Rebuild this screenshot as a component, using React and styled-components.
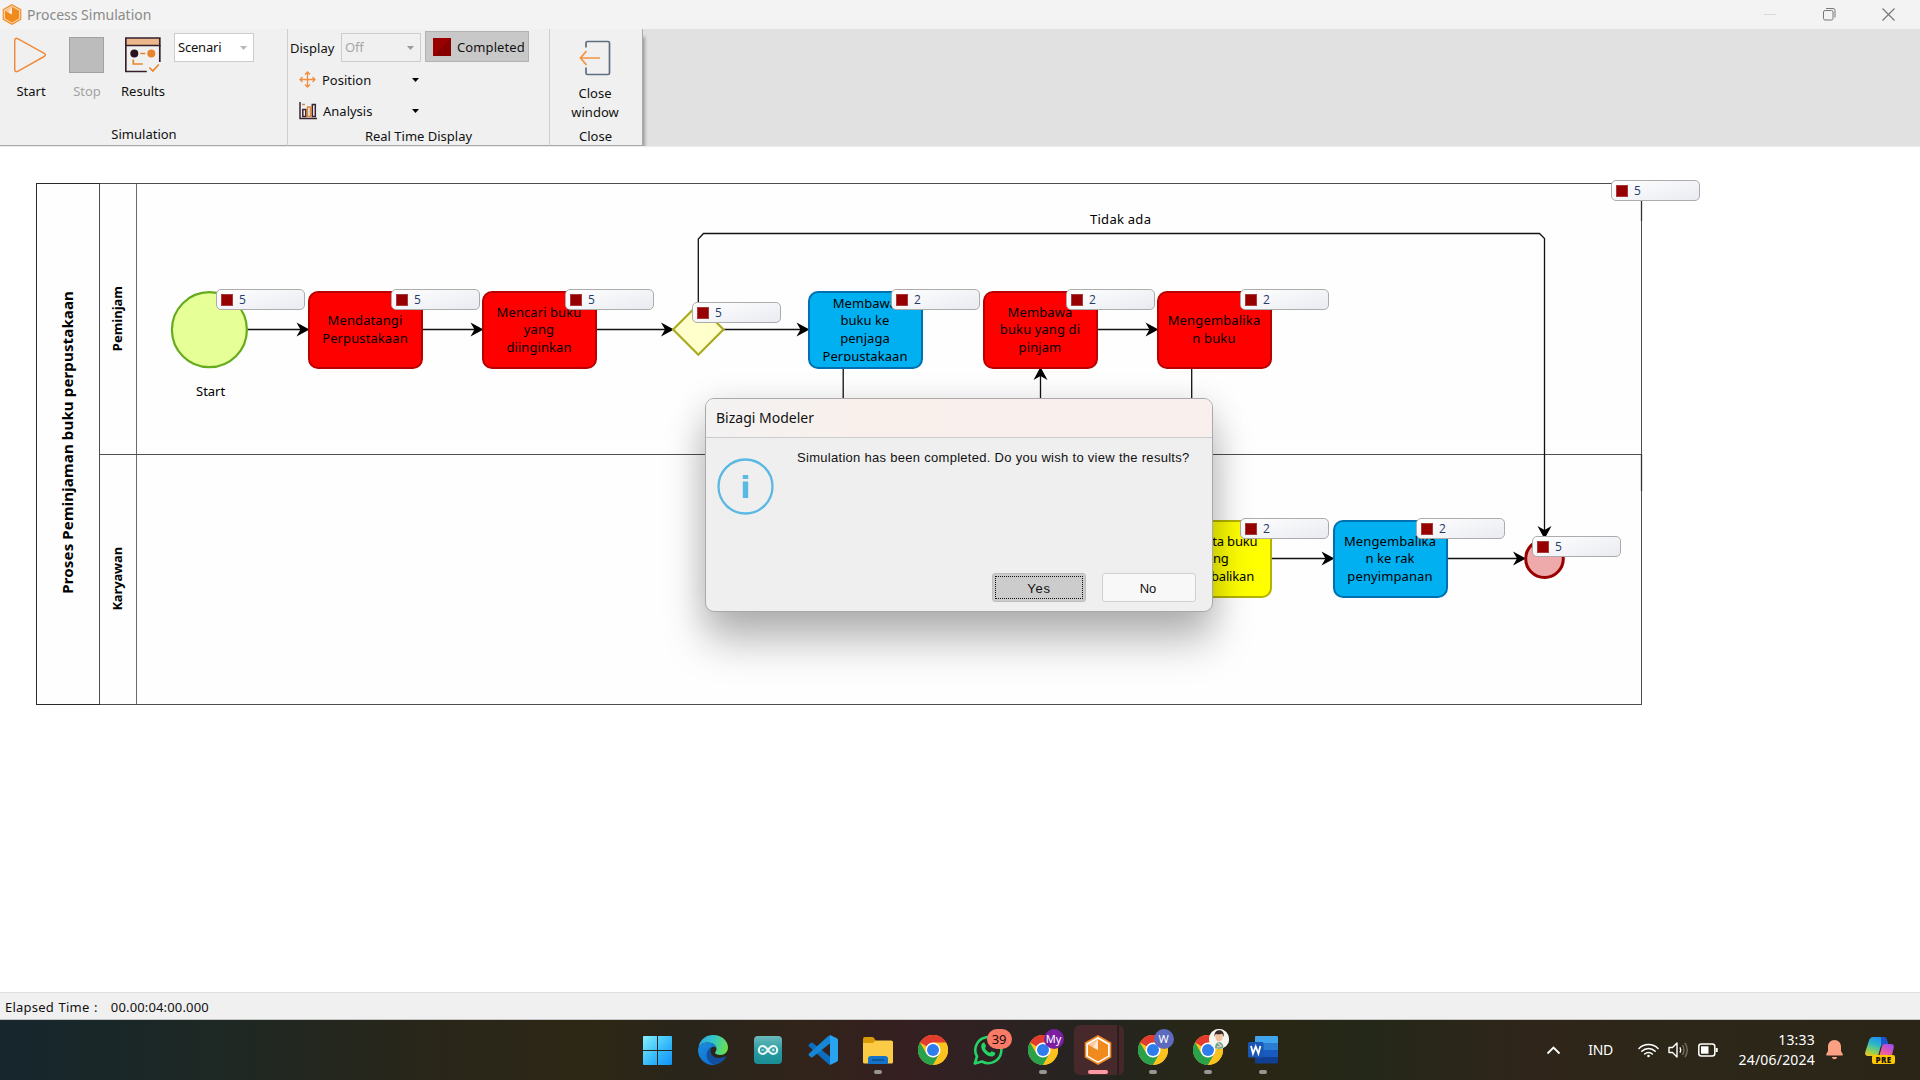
import React from "react";
import styled, { createGlobalStyle } from "styled-components";

const GlobalStyle = createGlobalStyle`
  * { box-sizing: border-box; }
  body { margin: 0; overflow: hidden; background: #fff; }
  #root { font: 13px/18px "Noto Sans", "Open Sans", sans-serif; color: #111; }
  svg { display: block; }
  button { font: inherit; color: inherit; margin: 0; padding: 0; border: 0; background: none; }
`;

const Desktop = styled.div`
  width: 1920px;
  height: 1080px;
  display: flex;
  flex-direction: column;
  overflow: hidden;
`;

/* ---------- title bar ---------- */
const TitleBar = styled.header`
  height: 29px;
  flex: none;
  display: flex;
  align-items: center;
  background: #f3f3f3;
  padding: 0 25px 0 2px;
`;
const WindowTitle = styled.h1`
  margin: 0 auto 0 5px;
  font-size: 14px;
  line-height: 20px;
  font-weight: 400;
  color: #8a8a8a;
`;
const WindowControls = styled.div`
  display: flex;
  gap: 46px;
`;

/* ---------- ribbon ---------- */
const Ribbon = styled.nav`
  height: 118px;
  flex: none;
  display: flex;
  background: #e1e1e1;
  border-bottom: 1px solid #ececec;
`;
const Group = styled.section`
  width: ${(p) => p.$width}px;
  height: 117px;
  display: flex;
  flex-direction: column;
  background: #f0f0f0;
  border-right: 1px solid ${(p) => (p.$last ? "#a8a8a8" : "#cfcfcf")};
  border-bottom: 1px solid #a6a6a6;
  box-shadow: ${(p) => (p.$last ? "3px 7px 3px -1px #9d9d9d" : "none")};
  clip-path: inset(0 -8px 0 0);
`;
const GroupBody = styled.div`
  flex: 1;
  display: flex;
  align-items: flex-start;
  justify-content: ${(p) => (p.$center ? "center" : "flex-start")};
  padding-right: ${(p) => (p.$center ? 2 : 0)}px;
`;
const GroupCaption = styled.div`
  height: 18px;
  margin-bottom: ${(p) => p.$bottom || 0}px;
  padding: 0 ${(p) => p.$right || 0}px 0 ${(p) => p.$left || 0}px;
  text-align: center;
`;
const BigButton = styled.button`
  width: ${(p) => p.$width}px;
  padding-top: ${(p) => p.$top || 8}px;
  display: flex;
  flex-direction: column;
  align-items: center;
  gap: ${(p) => p.$gap || 9}px;
  color: ${(p) => (p.$disabled ? "#a3a3a3" : "#111")};
  line-height: 18.5px;
`;
const Select = styled.div`
  width: ${(p) => p.$width}px;
  height: 29px;
  margin: 4px 0 0 ${(p) => p.$left || 0}px;
  padding: 0 6px 2px 3px;
  display: flex;
  align-items: center;
  justify-content: space-between;
  background: ${(p) => (p.$disabled ? "#f0f0f0" : "#fff")};
  border: 1px solid #cccccc;
  color: ${(p) => (p.$disabled ? "#a8a8a8" : "#111")};
  letter-spacing: -0.2px;
`;
const SelectCaret = styled.span`
  padding-top: 3px;
`;
const DisplayPanel = styled.div`
  display: flex;
  flex-direction: column;
`;
const DisplayRow = styled.div`
  display: flex;
  align-items: flex-start;
  height: 35px;
  padding-left: 2px;
`;
const FieldLabel = styled.span`
  width: 51px;
  padding-top: 10px;
`;
const CompletedToggle = styled.button`
  width: 104px;
  height: 31px;
  margin: 2px 0 0 4px;
  padding-left: 7px;
  display: flex;
  align-items: center;
  gap: 6px;
  background: #c8c8c8;
  border: 1px solid #b2b2b2;
  letter-spacing: 0.1px;
`;
const DarkRedSwatch = styled.span`
  width: 18px;
  height: 18px;
  background: linear-gradient(135deg, #9a0000 50%, #860000 50%);
`;
const MenuRow = styled.button`
  width: 140px;
  height: 31px;
  padding: 0 9px 0 11px;
  display: flex;
  align-items: center;
`;
const MenuLabel = styled.span`
  flex: 1;
  margin-left: 6px;
  text-align: left;
`;

/* ---------- diagram canvas ---------- */
const Canvas = styled.main`
  flex: 1;
  position: relative;
  overflow: hidden;
  background: #fff;
`;
const Pool = styled.div`
  position: absolute;
  left: 36px;
  top: 36px;
  width: 1606px;
  height: 522px;
  display: flex;
  border: 1px solid #4f4f4f;
  background: #fefefe;
`;
const PoolHeader = styled.div`
  width: 63px;
  display: flex;
  align-items: center;
  justify-content: center;
  padding: 0 3px 3px 0;
  border-right: 1px solid #4f4f4f;
  outline: 1px solid #2a2a2a;
  outline-offset: 0;
  clip-path: inset(-1px 0 -1px -1px);
`;
const VerticalText = styled.span`
  writing-mode: vertical-rl;
  transform: rotate(180deg);
  font-weight: 700;
  font-size: ${(p) => p.$size}px;
  line-height: 20px;
  letter-spacing: ${(p) => p.$track || 0}px;
  color: #000;
`;
const Lanes = styled.div`
  flex: 1;
  display: flex;
  flex-direction: column;
`;
const Lane = styled.div`
  flex: ${(p) => (p.$height ? `0 0 ${p.$height}px` : "1")};
  display: flex;
  border-bottom: ${(p) => (p.$height ? "1px solid #4f4f4f" : "0")};
`;
const LaneHeader = styled.div`
  width: 37px;
  border-right: 1px solid #6a6a6a;
  display: flex;
  align-items: center;
  justify-content: center;
  padding: 0 2px 1px 0;
`;
const Connectors = styled.svg`
  position: absolute;
  left: 0;
  top: 0;
`;
const taskColors = {
  red: ["#ff0000", "#b80000"],
  blue: ["#00b0f0", "#0070b0"],
  yellow: ["#ffff00", "#b4b400"],
};
const Task = styled.div`
  position: absolute;
  left: ${(p) => p.$x}px;
  top: ${(p) => p.$y}px;
  width: 115px;
  height: 78px;
  border-radius: 10px;
  border: 2px solid ${(p) => taskColors[p.$color][1]};
  background: ${(p) => taskColors[p.$color][0]};
  display: flex;
  align-items: center;
  justify-content: center;
`;
const TaskText = styled.span`
  height: 62px;
  overflow: hidden;
  display: flex;
  flex-direction: column;
  justify-content: center;
  text-align: center;
  white-space: pre;
  line-height: 17.6px;
  letter-spacing: ${(p) => p.$track || 0}px;
  padding-right: 1px;
  color: #000;
`;
const Badge = styled.div`
  position: absolute;
  left: ${(p) => p.$x}px;
  top: ${(p) => p.$y}px;
  width: 89px;
  height: 21px;
  padding-left: 4px;
  display: flex;
  align-items: center;
  gap: 6px;
  border: 1px solid #acacac;
  border-radius: 5px;
  background: linear-gradient(165deg, #ffffff, #e9ebf1);
  color: #243a6b;
  font: 12px/18px "Open Sans", sans-serif;
`;
const BadgeSquare = styled.span`
  width: 12px;
  height: 12px;
  background: #960000;
  border: 1px solid #a83a3a;
`;
const CanvasLabel = styled.span`
  position: absolute;
  left: ${(p) => p.$x}px;
  top: ${(p) => p.$y}px;
  color: #000;
  letter-spacing: ${(p) => p.$track || 0}px;
`;

/* ---------- dialog ---------- */
const Dialog = styled.div`
  position: absolute;
  left: 705px;
  top: 251px;
  width: 508px;
  height: 214px;
  display: flex;
  flex-direction: column;
  border: 1px solid #a9a9a9;
  border-radius: 9px;
  background: #efefef;
  box-shadow: 0 30px 42px rgba(0, 0, 0, 0.26), 0 4px 34px rgba(0, 0, 0, 0.12);
`;
const DialogTitle = styled.div`
  height: 39px;
  padding: 0 0 0 10px;
  display: flex;
  align-items: center;
  border-bottom: 1px solid #cbcbcb;
  border-radius: 8px 8px 0 0;
  background: linear-gradient(90deg, #f3f2f2, #f9f0ec 30%, #f9efed);
  font-size: 14px;
`;
const DialogBody = styled.div`
  flex: 1;
  display: flex;
  font: 13px/16px "Liberation Sans", Arial, sans-serif;
`;
const DialogIcon = styled.div`
  padding: 20px 0 0 11px;
  width: 91px;
`;
const DialogMessage = styled.p`
  margin: 12px 0 0;
  letter-spacing: 0.29px;
  white-space: nowrap;
`;
const DialogButtons = styled.div`
  display: flex;
  justify-content: flex-end;
  gap: 16px;
  padding: 0 16px 9px 0;
  font: 13px/16px "Liberation Sans", Arial, sans-serif;
`;
const DialogButton = styled.button`
  width: 94px;
  height: 29px;
  padding: 2px;
  display: flex;
  border: 1px solid ${(p) => (p.$focused ? "#bdbdbd" : "#d0d0d0")};
  border-radius: 3px;
  background: ${(p) => (p.$focused ? "#cccccc" : "#f8f8f8")};
`;
const FocusRing = styled.span`
  flex: 1;
  display: flex;
  align-items: center;
  justify-content: center;
  align-self: stretch;
  padding: 2px ${(p) => (p.$focused ? 0 : 2)}px 0 0;
  letter-spacing: ${(p) => (p.$focused ? 0.7 : 0)}px;
  border: 1px ${(p) => (p.$focused ? "dotted #111" : "solid transparent")};
`;

/* ---------- status bar ---------- */
const StatusBar = styled.footer`
  height: 28px;
  flex: none;
  display: flex;
  align-items: center;
  gap: 13px;
  padding: 2px 0 0 5px;
  background: #f0f0f0;
  border-top: 1px solid #dedede;
  border-bottom: 1px solid #c4c4c4;
  word-spacing: 1px;
`;
const StatusLabel = styled.span`
  letter-spacing: ${(p) => p.$track}px;
`;

/* ---------- taskbar ---------- */
const Taskbar = styled.div`
  height: 60px;
  flex: none;
  display: flex;
  justify-content: space-between;
  padding: 0 25px 0 630px;
  background: linear-gradient(90deg, #16262d 0%, #1d2825 10%, #29261a 22%, #2d2715 31%, #29251b 36%, #32241a 42%, #351f21 47%, #2e2223 52%, #242421 57%, #262619 61%, #2a2614 66%, #242819 71%, #30251a 80%, #2c2718 87%, #2b2618 94%, #2a2517 100%);
`;
const AppRow = styled.div`
  display: flex;
`;
const AppCell = styled.button`
  width: 55px;
  height: 60px;
  display: flex;
  flex-direction: column;
  align-items: center;
  justify-content: center;
  position: relative;
`;
const ActiveTile = styled.span`
  position: absolute;
  left: 4px;
  top: 5px;
  width: 50px;
  height: 50px;
  border-radius: 6px;
  background: linear-gradient(90deg, #47292b 0 43px, #2f1d1e 43px 45px, #452729 45px);
`;
const AppIcon = styled.span`
  position: relative;
  display: block;
`;
const Indicator = styled.span`
  position: absolute;
  bottom: 6px;
  width: ${(p) => (p.$active ? 20 : 8)}px;
  height: 4px;
  border-radius: 2px;
  background: ${(p) => (p.$active ? "#ff99a4" : "#989694")};
`;
const AppBadge = styled.span`
  position: absolute;
  right: ${(p) => p.$right}px;
  top: -6px;
  min-width: 20px;
  height: 20px;
  border-radius: 10px;
  display: flex;
  align-items: center;
  justify-content: center;
  overflow: hidden;
  background: ${(p) => p.$bg};
  color: ${(p) => p.$fg || "#fff"};
  font-size: ${(p) => p.$size || 11}px;
  padding: 0 ${(p) => p.$pad || 0}px;
`;
const Tray = styled.div`
  display: flex;
  align-items: center;
  color: #fff;
`;
const Language = styled.span`
  font-size: 14px;
  letter-spacing: -0.3px;
  margin: 0 25px 0 27px;
`;
const TrayIcons = styled.div`
  display: flex;
  align-items: center;
  gap: 9px;
`;
const Clock = styled.div`
  width: 82px;
  margin: 0 11px 0 15px;
  font-size: 14px;
  line-height: 20px;
  letter-spacing: 0.2px;
  text-align: right;
`;
const CopilotSlot = styled.div`
  margin-left: 22px;
  display: flex;
  flex-direction: column;
  align-items: flex-end;
  width: 30px;
`;
const PreTag = styled.span`
  width: 23px;
  height: 9px;
  margin-top: -8px;
  border-radius: 2px;
  background: #ffc800;
  color: #111;
  font: 800 8px/9px "Open Sans", sans-serif;
  letter-spacing: 0.4px;
  text-align: center;
  position: relative;
`;

const BizagiLogo = ({ w, h, ring }) => (
  <svg width={w} height={h} viewBox="0 0 28 30">
    <path d="M14 1 26.5 8v14L14 29 1.500 22V8Z" fill={ring === "white" ? "#fff" : "#fbd3a8"} stroke="#f08a24" strokeWidth="1.600" />
    <path d="M14 4 24 9.700v11L14 26.400 4 20.700v-11Z" fill="#f08a1d" />
    <path d="M14 4v11L4 9.700Z" fill="#fbc9a0" />
    <path d="M14 4v11l-5-2.600Z" fill="#fff" opacity=".55" />
  </svg>
);

const Caret = ({ color }) => (
  <svg width="7" height="4"><path d="M0 0h7L3.500 4Z" fill={color} /></svg>
);

const ChromeIcon = () => (
  <svg width="30" height="30" viewBox="0 0 48 48">
    <circle cx="24" cy="24" r="24" fill="#fcc31e" />
    <path d="M24 24 3.200 12A24 24 0 0 1 44.800 12Z" fill="#e33b2e" />
    <path d="M3.200 12A24 24 0 0 0 24 48L34.400 30 24 24 13.600 30Z" fill="#2aa14b" />
    <path d="M34.400 30 24 48A24 24 0 0 0 44.800 12H24Z" fill="#fcc31e" />
    <circle cx="24" cy="24" r="12" fill="#fff" />
    <circle cx="24" cy="24" r="9.600" fill="#2f7ded" />
  </svg>
);

const WindowsIcon = () => (
  <svg width="29" height="29" viewBox="0 0 29 29">
    <defs>
      <linearGradient id="win" gradientUnits="userSpaceOnUse" x1="0" y1="0" x2="29" y2="29">
        <stop offset="0" stopColor="#86f0ff" /><stop offset=".55" stopColor="#36bbfa" /><stop offset="1" stopColor="#0f92f5" />
      </linearGradient>
    </defs>
    <path d="M0 1Q0 0 1 0h13v14H0ZM15 0h13q1 0 1 1v13H15ZM0 15h14v14H1q-1 0-1-1ZM15 15h14v13q0 1-1 1H15Z" fill="url(#win)" />
  </svg>
);

const EdgeIcon = () => (
  <svg width="30" height="30" viewBox="0 0 30 30">
    <defs>
      <linearGradient id="edgeTop" x1="0" y1=".3" x2="1" y2=".5">
        <stop offset="0" stopColor="#2aa7e8" /><stop offset=".5" stopColor="#36c9c4" /><stop offset="1" stopColor="#6be04a" />
      </linearGradient>
      <linearGradient id="edgeLeft" x1="0" y1="0" x2=".6" y2="1">
        <stop offset="0" stopColor="#1c8fe0" /><stop offset="1" stopColor="#0f6fd0" />
      </linearGradient>
    </defs>
    <path d="M0.500 12C2 4.500 8 0 15 0c9 0 15 6 15 12.500 0 4.500-3.500 7.500-7.500 7.500-3.500 0-5.500-1.200-5.500-2.200 0-.8 1.500-1.500 1.500-4C18.500 10.500 15 7.500 10 7.500 5.500 7.500 2 9.500 0.500 12Z" fill="url(#edgeTop)" />
    <path d="M0 15C0 11 4 7.500 10 7.500c4.500 0 8 2.500 8.400 5.500C17 11.400 15 11.500 14 12c-2.500 1.300-4.500 4-4.500 8 0 5 3.500 8.500 8 9.700C8 31.500 0 24 0 15Z" fill="url(#edgeLeft)" />
    <path d="M14 12c-1.500 2-1.800 4.500-.5 7.200 2 3.900 8 5 13.500 2.300.8-.3 1.200.3.8 1-2.300 4-6 6.500-10.300 7.200C12 28.700 8.700 24.500 8.700 20c0-4 2.500-7 5.300-8Z" fill="#124f9e" />
  </svg>
);

const ArduinoIcon = () => (
  <svg width="28" height="28" viewBox="0 0 28 28">
    <defs><linearGradient id="ard" x1="0" y1="0" x2="0" y2="1"><stop offset="0" stopColor="#6cb9bb" /><stop offset=".5" stopColor="#2a9da3" /><stop offset="1" stopColor="#188d94" /></linearGradient></defs>
    <rect width="28" height="28" rx="4" fill="url(#ard)" />
    <path d="M14 14c-2-3-3.500-4-5.200-4a4 4 0 0 0 0 8c1.700 0 3.200-1 5.200-4Zm0 0c2-3 3.500-4 5.200-4a4 4 0 0 1 0 8c-1.700 0-3.200-1-5.200-4Z" fill="none" stroke="#e8f6f6" strokeWidth="2.200" />
    <path d="M7.300 14h3M17.700 14h3M19.200 12.500v3" stroke="#e8f6f6" strokeWidth="1" />
  </svg>
);

const VsCodeIcon = () => (
  <svg width="30" height="30" viewBox="0 0 30 30">
    <path d="M1 9.500 3 7.800q.8-.5 1.500 0L22.500 22v7.500Q21 29.800 20 28.700L.8 11.300q-.8-1 .2-1.800Z" fill="#0d6ebf" />
    <path d="M1 20.500l2 1.800q.8.500 1.500 0L22.500 8V.500Q21 .2 20 1.300L.8 18.700q-.8 1 .2 1.800Z" fill="#1587d6" />
    <path d="M22 0l6.800 3.200Q30 3.800 30 5v20q0 1.200-1.200 1.800L22 30Z" fill="#27a3f2" />
  </svg>
);

const FolderIcon = () => (
  <svg width="30" height="27" viewBox="0 0 30 27">
    <path d="M0 2q0-2 2-2h7q1.200 0 2 1l2 3H28q2 0 2 2v4H0Z" fill="#d99a09" />
    <path d="M0 6h10l2.500-2.500H28q2 0 2 2V25q0 1.500-1.500 1.500h-27Q0 26.500 0 25Z" fill="#fccb45" />
    <path d="M5 27v-5q0-3 3-3h14q3 0 3 3v5Z" fill="#1373c9" />
    <path d="M9 23h12" stroke="#084b8f" strokeWidth="1.400" />
  </svg>
);

const WhatsAppIcon = () => (
  <svg width="30" height="30" viewBox="0 0 30 30">
    <path d="M1.800 28.500 4 21.500A13 13 0 1 1 9 26.500Z" fill="none" stroke="#25d366" strokeWidth="2.600" strokeLinejoin="round" />
    <path d="M9.300 8.300c1-1 2-1 2.600.2l1.100 2.500c.2.800-1 1.700-1 2.200 1 2.300 2.700 3.700 4.900 4.600.6 0 1.300-1.600 2-1.600l2.700 1.300c1 .6.600 1.900-.1 2.700-2.500 2.600-6.500 1-9.500-1.700-3.300-3-5-7.400-2.700-10.200Z" fill="#25d366" />
  </svg>
);

const WordIcon = () => (
  <svg width="30" height="28" viewBox="0 0 30 28">
    <path d="M7 1q0-1 1-1h21q1 0 1 1v6H7Z" fill="#41a5ee" />
    <path d="M7 7h23v7H7Z" fill="#2b7cd3" />
    <path d="M7 14h23v7H7Z" fill="#185abd" />
    <path d="M7 21h23v5.500q0 1-1 1H8q-1 0-1-1Z" fill="#103f91" />
    <rect x="0" y="6" width="15.500" height="15.500" rx="1.500" fill="#1a56b5" />
    <path d="M3 10l2 7.500 2.700-7 2.700 7 2-7.500" fill="none" stroke="#fff" strokeWidth="1.800" />
  </svg>
);

const AvatarFace = () => (
  <svg width="20" height="20" viewBox="0 0 20 20">
    <rect width="20" height="20" fill="#f7f5f0" />
    <path d="M6 20c0-5 1.500-7 4-7s4.500 2 4.500 7Z" fill="#5fa9a0" />
    <ellipse cx="10" cy="8" rx="3.600" ry="4.300" fill="#eec49d" />
    <path d="M5.500 8C5 3 7.500 1.200 10.500 1.200S15.500 3.500 14.500 8c-.6-2-1-3-2-3.300-2 .8-4 .6-5.500.3-.8.7-1 1.500-1.500 3Z" fill="#3a2a25" />
    <path d="M8.500 13.500l3.500 3M8 18l5-1" stroke="#eec49d" strokeWidth="1.500" />
  </svg>
);

const tasks = [
  { x: 308, y: 144, color: "red", lines: ["Mendatangi", "Perpustakaan"], track: 0.1 },
  { x: 482, y: 144, color: "red", lines: ["Mencari buku", "yang", "diinginkan"], track: 0.08 },
  { x: 808, y: 144, color: "blue", lines: ["Membawa", "buku ke", "penjaga", "Perpustakaan"], track: 0.05 },
  { x: 983, y: 144, color: "red", lines: ["Membawa", "buku yang di", "pinjam"], track: 0.1 },
  { x: 1157, y: 144, color: "red", lines: ["Mengembalika", "n buku"], track: 0.15 },
  { x: 1157, y: 373, color: "yellow", lines: ["Mendata buku", "yang", "dikembalikan"], track: -0.15 },
  { x: 1333, y: 373, color: "blue", lines: ["Mengembalika", "n ke rak", "penyimpanan"], track: 0.1 },
];

const badges = [
  [216, 142, 5], [391, 142, 5], [565, 142, 5], [692, 155, 5], [891, 142, 2], [1066, 142, 2],
  [1240, 142, 2], [1240, 371, 2], [1416, 371, 2], [1532, 389, 5], [1611, 33, 5],
];

const Arrow = ({ x, y, turn = 0 }) => (
  <path d="M0 0 -13 -7 -9 0 -13 7Z" transform={`translate(${x} ${y}) rotate(${turn})`} fill="#000" />
);

const Diagram = () => (
  <>
    <Pool>
      <PoolHeader>
        <VerticalText $size={15} $track={0.15}>Proses Peminjaman buku perpustakaan</VerticalText>
      </PoolHeader>
      <Lanes>
        <Lane $height={271}>
          <LaneHeader><VerticalText $size={13}>Peminjam</VerticalText></LaneHeader>
        </Lane>
        <Lane>
          <LaneHeader><VerticalText $size={13} $track={-0.15}>Karyawan</VerticalText></LaneHeader>
        </Lane>
      </Lanes>
    </Pool>
    <Connectors width="1920" height="845" fill="none" stroke="#111" strokeWidth="1.300">
      <path d="M247 182.500H302M423 182.500H476M597 182.500H667M723 182.500H802M1098 182.500H1151M1272 411.500H1327M1448 411.500H1520" />
      <path d="M698.300 157V92L703.500 86.500H1539.500L1544.500 91.500V384M843.200 221V260M1040.500 226V260M1191.700 221V260" />
      <path d="M1641.500 54v20M1641.500 307v37" stroke="#333" />
      <g stroke="none">
        <Arrow x={309.5} y={182.5} /><Arrow x={483.5} y={182.5} /><Arrow x={674} y={182.5} />
        <Arrow x={809.5} y={182.5} /><Arrow x={1158.5} y={182.5} /><Arrow x={1334.5} y={411.5} />
        <Arrow x={1526} y={411.5} /><Arrow x={1040.5} y={220} turn={-90} /><Arrow x={1544.5} y={392} turn={90} />
      </g>
      <circle cx="209.400" cy="182.700" r="37.500" fill="#e6ff97" stroke="#66ab1e" strokeWidth="2.200" />
      <path d="M698.300 157.300 723.500 182.500 698.300 207.700 673.100 182.500Z" fill="#ffffcc" stroke="#aaaa20" strokeWidth="2.200" />
      <circle cx="1544.500" cy="411.700" r="18.800" fill="#eeaaaa" stroke="#990000" strokeWidth="3" />
    </Connectors>
    {tasks.map((t, i) => (
      <Task key={i} $x={t.x} $y={t.y} $color={t.color}>
        <TaskText $track={t.track}>{t.lines.map((l) => <span key={l}>{l}</span>)}</TaskText>
      </Task>
    ))}
    <CanvasLabel $x={196} $y={235}>Start</CanvasLabel>
    <CanvasLabel $x={1090} $y={63} $track={0.27}>Tidak ada</CanvasLabel>
    {badges.map(([x, y, n], i) => (
      <Badge key={i} $x={x} $y={y}><BadgeSquare />{n}</Badge>
    ))}
  </>
);

export default function App() {
  return (
    <Desktop>
      <GlobalStyle />
      <TitleBar>
        <BizagiLogo w={20} h={21} />
        <WindowTitle>Process Simulation</WindowTitle>
        <WindowControls>
          <svg width="13" height="13"><path d="M0 6.500h12" stroke="#d9d9d9" /></svg>
          <svg width="13" height="13" fill="none" stroke="#777"><rect x=".5" y="2.500" width="9.500" height="9.500" rx="1.500" /><path d="M3 .5h7q2 0 2 2v7" /></svg>
          <svg width="13" height="13" stroke="#777" strokeWidth="1.200"><path d="M.5.500l12 12M12.500.500l-12 12" /></svg>
        </WindowControls>
      </TitleBar>

      <Ribbon>
        <Group $width={288}>
          <GroupBody>
            <BigButton $width={62}>
              <svg width="34" height="36" fill="none" stroke="#f08a3a" strokeWidth="1.500" strokeLinejoin="round">
                <path d="M.7 3.500Q.7.500 3.700 1.700L30.200 16.300q2.500 1.500 0 3.200L3.700 34.300Q.7 35.500.7 32.500Z" />
              </svg>
              Start
            </BigButton>
            <BigButton $width={50} $disabled>
              <svg width="36" height="36"><rect x=".5" y=".5" width="34" height="35" fill="#bcbcbc" stroke="#a2a2a2" /></svg>
              Stop
            </BigButton>
            <BigButton $width={62}>
              <svg width="36" height="36" fill="none" stroke="#35202b" strokeWidth="1.700">
                <path d="M.8 8.500V1h34v7.500Z" fill="#ecb78a" />
                <path d="M.8 8v26.500h21M34.800 8v17" />
                <circle cx="9.300" cy="16.500" r="4" fill="#2b1220" stroke="none" />
                <circle cx="26.300" cy="16.500" r="4" fill="#e8842c" stroke="none" />
                <path d="M15.300 16.500h5M8.300 22.500v4.500h9.500M24.300 30.500l3.500 3.500 6-6.500" stroke="#e8842c" />
              </svg>
              Results
            </BigButton>
            <Select $width={80}>Scenari<SelectCaret><Caret color="#b8b8b8" /></SelectCaret></Select>
          </GroupBody>
          <GroupCaption $bottom={2} $left={1}>Simulation</GroupCaption>
        </Group>

        <Group $width={262}>
          <GroupBody>
            <DisplayPanel>
              <DisplayRow>
                <FieldLabel>Display</FieldLabel>
                <Select $width={80} $disabled>Off<SelectCaret><Caret color="#9a9a9a" /></SelectCaret></Select>
                <CompletedToggle><DarkRedSwatch />Completed</CompletedToggle>
              </DisplayRow>
              <MenuRow>
                <svg width="17" height="17" fill="none" stroke="#ef8f3f" strokeWidth="1.300"><path d="M8.500 1v15M1 8.500h15M6 3.500 8.500 1 11 3.500M6 13.500 8.500 16l2.500-2.500M3.500 6 1 8.500 3.500 11M13.500 6 16 8.500 13.500 11" /></svg>
                <MenuLabel>Position</MenuLabel>
                <Caret color="#000" />
              </MenuRow>
              <MenuRow>
                <svg width="18" height="18" fill="none" stroke="#3a2430" strokeWidth="1.500">
                  <path d="M1 0v16.500h17" /><path d="M3 2.500h3" stroke="#c98a62" />
                  <path d="M3.800 7.500h3v7h-3ZM13.300 2.500h3v12h-3Z" /><path d="M8.500 5h3v9.500h-3Z" stroke="#e8842c" />
                </svg>
                <MenuLabel>Analysis</MenuLabel>
                <Caret color="#000" />
              </MenuRow>
            </DisplayPanel>
          </GroupBody>
          <GroupCaption>Real Time Display</GroupCaption>
        </Group>

        <Group $width={93} $last>
          <GroupBody $center>
            <BigButton $width={60} $top={9} $gap={6}>
              <svg width="32" height="40" fill="none" stroke="#5f6d80" strokeWidth="1.700">
                <path d="M7 9.500V5q0-1.500 1.500-1.500H29q1.500 0 1.500 1.500V35q0 1.500-1.500 1.500H8.500Q7 36.500 7 35v-5.500" />
                <path d="M21 20H1.500M7.500 13 1.500 20l6 7" stroke="#f09442" />
              </svg>
              <span>Close<br />window</span>
            </BigButton>
          </GroupBody>
          <GroupCaption $right={1}>Close</GroupCaption>
        </Group>
      </Ribbon>

      <Canvas>
        <Diagram />
        <Dialog>
          <DialogTitle>Bizagi Modeler</DialogTitle>
          <DialogBody>
            <DialogIcon>
              <svg width="57" height="57" viewBox="0 0 57 57" fill="none">
                <circle cx="28.500" cy="28.500" r="27" stroke="#5bb8e3" strokeWidth="2.300" />
                <path d="M25.800 17h5.400v4h-5.400ZM25.800 23.500h5.400V40h-5.400Z" fill="#5bb8e3" />
              </svg>
            </DialogIcon>
            <DialogMessage>Simulation has been completed. Do you wish to view the results?</DialogMessage>
          </DialogBody>
          <DialogButtons>
            <DialogButton $focused><FocusRing $focused>Yes</FocusRing></DialogButton>
            <DialogButton><FocusRing>No</FocusRing></DialogButton>
          </DialogButtons>
        </Dialog>
      </Canvas>

      <StatusBar>
        <StatusLabel $track={0.22}>Elapsed Time :</StatusLabel>
        <StatusLabel $track={0.15}>00.00:04:00.000</StatusLabel>
      </StatusBar>

      <Taskbar>
        <AppRow>
          <AppCell><WindowsIcon /></AppCell>
          <AppCell><EdgeIcon /></AppCell>
          <AppCell><ArduinoIcon /></AppCell>
          <AppCell><VsCodeIcon /></AppCell>
          <AppCell><FolderIcon /><Indicator /></AppCell>
          <AppCell><ChromeIcon /></AppCell>
          <AppCell>
            <AppIcon><WhatsAppIcon /><AppBadge $right={-9} $bg="#f97b66" $fg="#1c0b08" $size={13} $pad={5}>39</AppBadge></AppIcon>
          </AppCell>
          <AppCell>
            <AppIcon><ChromeIcon /><AppBadge $right={-6} $bg="#7a1fa2">My</AppBadge></AppIcon><Indicator />
          </AppCell>
          <AppCell>
            <ActiveTile /><AppIcon><BizagiLogo w={28} h={30} ring="white" /></AppIcon><Indicator $active />
          </AppCell>
          <AppCell>
            <AppIcon><ChromeIcon /><AppBadge $right={-6} $bg="#5c6bc0">W</AppBadge></AppIcon><Indicator />
          </AppCell>
          <AppCell>
            <AppIcon><ChromeIcon /><AppBadge $right={-6} $bg="#fff"><AvatarFace /></AppBadge></AppIcon><Indicator />
          </AppCell>
          <AppCell><WordIcon /><Indicator /></AppCell>
        </AppRow>
        <Tray>
          <svg width="15" height="10" fill="none" stroke="#fff" strokeWidth="1.800"><path d="M1.500 8.500l6-6 6 6" /></svg>
          <Language>IND</Language>
          <TrayIcons>
            <svg width="21" height="16" viewBox="0 0 21 16" fill="none" stroke="#fff" strokeWidth="1.500" strokeLinecap="round">
              <path d="M1 6.500a13.300 13.300 0 0 1 19 0M3.800 9.300a9.300 9.300 0 0 1 13.400 0M6.700 12a5.300 5.300 0 0 1 7.600 0" />
              <circle cx="10.500" cy="14" r="1.300" fill="#fff" stroke="none" />
            </svg>
            <svg width="21" height="18" viewBox="0 0 21 18" fill="none" stroke="#fff" strokeWidth="1.400" strokeLinejoin="round">
              <path d="M1 6.500h3.500L9 2v14l-4.500-4.500H1Z" />
              <path d="M12 6.300q1.500 2.700 0 5.400" />
              <path d="M14.500 4q3 5 0 10M17 1.800q4.500 7.200 0 14.400" stroke="#75705f" />
            </svg>
            <svg width="20" height="14" viewBox="0 0 20 14" fill="none" stroke="#fff" strokeWidth="1.500">
              <rect x=".8" y="1" width="16" height="12" rx="2.500" /><rect x="3" y="3.300" width="7.500" height="7.400" fill="#fff" stroke="none" /><path d="M18.700 5v4" strokeWidth="2" />
            </svg>
          </TrayIcons>
          <Clock>13:33<br />24/06/2024</Clock>
          <svg width="17" height="20" viewBox="0 0 17 20" fill="#fca083">
            <path d="M8.500 0C4.500 0 2 3 2 6.500V11L.2 14.300q-.3 1.200.8 1.200h15q1.100 0 .8-1.200L15 11V6.500C15 3 12.500 0 8.500 0ZM5.800 17h5.400q-.6 2.300-2.700 2.300T5.800 17Z" />
          </svg>
          <CopilotSlot>
            <svg width="30" height="26" viewBox="0 0 30 26">
              <defs>
                <linearGradient id="copA" x1=".6" y1="0" x2=".2" y2="1"><stop offset="0" stopColor="#1d8ef0" /><stop offset=".4" stopColor="#2cb8c8" /><stop offset=".75" stopColor="#8cd05a" /><stop offset="1" stopColor="#f2c81e" /></linearGradient>
                <linearGradient id="copB" x1=".8" y1="0" x2=".2" y2="1"><stop offset="0" stopColor="#a04ef0" /><stop offset=".5" stopColor="#e858a8" /><stop offset="1" stopColor="#ff8a6a" /></linearGradient>
              </defs>
              <path d="M8 0h11q2 0 2.700 2.500L23 7h-4q-2.500 0-3.300 2.500L13 19H3q-3.500 0-2.700-4L4 3.500Q5.200 0 8 0Z" fill="url(#copA)" />
              <path d="M16 0h3q2 0 2.700 2.500L23 7h-4q-1.800 0-2.800 1.500Z" fill="#1c54d4" />
              <path d="M19.500 7H26q3.500 0 2.700 4l-2 8q-1 3.500-4 3.500H11q2.500 0 3.300-3.500l2.700-10Q17.700 7 19.500 7Z" fill="url(#copB)" />
            </svg>
            <PreTag>PRE</PreTag>
          </CopilotSlot>
        </Tray>
      </Taskbar>
    </Desktop>
  );
}
